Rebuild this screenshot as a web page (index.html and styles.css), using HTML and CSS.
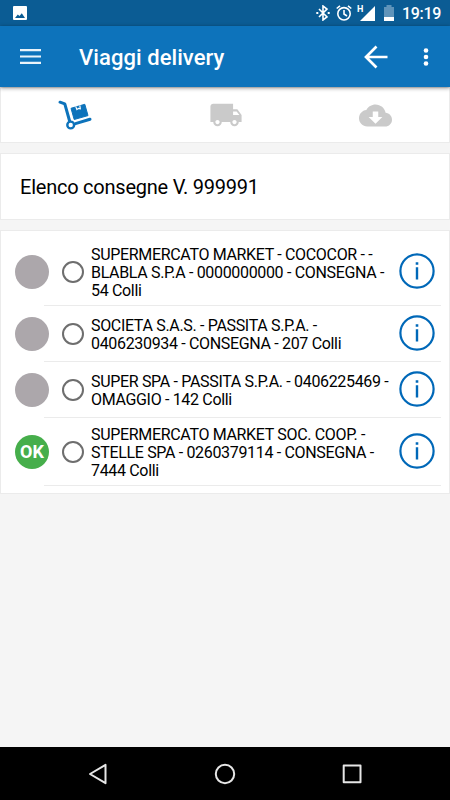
FILE: index.html
```html
<!DOCTYPE html>
<html lang="it">
<head>
    <meta charset="UTF-8">
    <meta name="viewport" content="width=device-width, initial-scale=1.0">
    <title>Viaggi delivery</title>
    <link rel="stylesheet" href="styles.css">
</head>
<body>
    <div class="status-bar">
        <svg class="picture" width="14" height="14" viewBox="0 0 14 14"><path fill="#fff" fill-rule="evenodd" d="M1 0h12a1 1 0 0 1 1 1v12a1 1 0 0 1-1 1H1a1 1 0 0 1-1-1V1a1 1 0 0 1 1-1zM2 12h10L8.8 7.2 6.500 10 4.800 8.400z"/></svg>
        <svg class="bluetooth" width="14" height="16" viewBox="0 0 14 16" fill="none" stroke="#fff" stroke-width="1.600"><path d="M3 4l8 8-4 3V1l4 3-8 8"/><path d="M.3 8h2M11.700 8h2" stroke-width="2"/></svg>
        <svg class="alarm" width="16" height="16" viewBox="0 0 16 16" fill="none" stroke="#fff" stroke-width="1.600"><circle cx="8" cy="8.800" r="6.200"/><path d="M8 5v4l3 2M.7 3.500L4 .8M15.300 3.500L12 .8"/></svg>
        <span class="net">H</span>
        <svg class="signal" width="15" height="15" viewBox="0 0 15 15"><path fill="#fff" d="M15 0v15H0z"/></svg>
        <svg class="battery" width="10" height="16" viewBox="0 0 10 16"><path fill="#5f94ba" d="M0 2h2.500V0h5v2H10v10H0z"/><path fill="#fff" d="M0 12h10v4H0z"/></svg>
        <span class="clock">19:19</span>
    </div>

    <div class="app-bar">
        <svg class="menu" width="21" height="15" viewBox="0 0 21 15"><path fill="#e9f3fa" d="M0 0h21v2.200H0zM0 6.400h21v2.200H0zM0 12.800h21V15H0z"/></svg>
        <h1>Viaggi delivery</h1>
        <svg class="back" width="24" height="24" viewBox="0 0 24 24" fill="none" stroke="#fff" stroke-width="2.700"><path d="M23.500 12H2.500M12.500 1.500L2 12l10.500 10.500"/></svg>
        <svg class="more" width="6" height="20" viewBox="0 0 6 20" fill="#fff"><circle cx="3" cy="3.500" r="2.300"/><circle cx="3" cy="10" r="2.300"/><circle cx="3" cy="16.500" r="2.300"/></svg>
    </div>

    <div class="tabs">
        <div class="tab">
            <svg class="dolly" width="34" height="30" viewBox="0 0 34 30">
                <path fill="none" stroke="#0d73bb" stroke-width="3" stroke-linecap="round" stroke-linejoin="round" d="M2 2.200L6.800 3.800 11.600 21M17.500 23.600L32 19.200"/>
                <circle cx="12.700" cy="25" r="3.400" fill="#fff" stroke="#0d73bb" stroke-width="2.400"/>
                <path fill="#0d73bb" stroke="#0d73bb" stroke-width="1" stroke-linejoin="round" d="M13 8.300L26.800 4.300 30 15.600 16.200 19.500z"/>
                <path fill="none" stroke="#fff" stroke-width="1.200" d="M17.700 6.400l1.200 3.200 1.500-1.200 1.900.4-.5-3.500"/>
            </svg>
        </div>
        <div class="tab">
            <svg width="34" height="34" viewBox="0 0 24 24"><path fill="#cacaca" d="M20 8h-3V4H3c-1.100 0-2 .9-2 2v11h2c0 1.660 1.340 3 3 3s3-1.340 3-3h6c0 1.660 1.340 3 3 3s3-1.340 3-3h2v-5l-3-4zM6 18.500c-.83 0-1.500-.67-1.500-1.500s.67-1.500 1.500-1.500 1.500.67 1.500 1.500-.67 1.500-1.500 1.500zm13.500-9l1.960 2.500H17V9.500h2.500zm-1.500 9c-.83 0-1.500-.67-1.500-1.500s.67-1.500 1.500-1.500 1.500.67 1.500 1.500-.67 1.500-1.500 1.500z"/></svg>
        </div>
        <div class="tab">
            <svg width="33" height="33" viewBox="0 0 24 24"><path fill="#cacaca" fill-rule="evenodd" d="M19.350 10.040C18.670 6.590 15.640 4 12 4 9.110 4 6.600 5.640 5.350 8.040 2.340 8.360 0 10.910 0 14c0 3.310 2.690 6 6 6h13c2.760 0 5-2.240 5-5 0-2.640-2.050-4.780-4.650-4.960zM17 13l-5 5-5-5h3V9h4v4h3z"/></svg>
        </div>
    </div>

    <div class="card heading">Elenco consegne V. 999991</div>

    <div class="card list">
        <div class="row tall">
            <span class="state"></span>
            <div class="content">
                <span class="radio"></span>
                <p>SUPERMERCATO MARKET - COCOCOR - -<br>BLABLA S.P.A - 0000000000 - CONSEGNA -<br>54 Colli</p>
                <svg class="info" width="36" height="36" viewBox="0 0 36 36"><circle cx="18" cy="18" r="16.600" fill="none" stroke="#0068b8" stroke-width="2.200"/><path fill="#0068b8" d="M16.700 9.300h2.600v2.400h-2.600zM16.800 14.300h2.400V26.500h-2.400z"/></svg>
            </div>
        </div>
        <div class="row">
            <span class="state"></span>
            <div class="content">
                <span class="radio"></span>
                <p>SOCIETA S.A.S. - PASSITA S.P.A. -<br>0406230934 - CONSEGNA - 207 Colli</p>
                <svg class="info" width="36" height="36" viewBox="0 0 36 36"><circle cx="18" cy="18" r="16.600" fill="none" stroke="#0068b8" stroke-width="2.200"/><path fill="#0068b8" d="M16.700 9.300h2.600v2.400h-2.600zM16.800 14.300h2.400V26.500h-2.400z"/></svg>
            </div>
        </div>
        <div class="row">
            <span class="state"></span>
            <div class="content">
                <span class="radio"></span>
                <p>SUPER SPA - PASSITA S.P.A. - 0406225469 -<br>OMAGGIO - 142 Colli</p>
                <svg class="info" width="36" height="36" viewBox="0 0 36 36"><circle cx="18" cy="18" r="16.600" fill="none" stroke="#0068b8" stroke-width="2.200"/><path fill="#0068b8" d="M16.700 9.300h2.600v2.400h-2.600zM16.800 14.300h2.400V26.500h-2.400z"/></svg>
            </div>
        </div>
        <div class="row tall last">
            <span class="state ok">OK</span>
            <div class="content">
                <span class="radio"></span>
                <p>SUPERMERCATO MARKET SOC. COOP. -<br>STELLE SPA - 0260379114 - CONSEGNA -<br>7444 Colli</p>
                <svg class="info" width="36" height="36" viewBox="0 0 36 36"><circle cx="18" cy="18" r="16.600" fill="none" stroke="#0068b8" stroke-width="2.200"/><path fill="#0068b8" d="M16.700 9.300h2.600v2.400h-2.600zM16.800 14.300h2.400V26.500h-2.400z"/></svg>
            </div>
        </div>
    </div>

    <div class="nav-bar">
        <svg width="22" height="22" viewBox="0 0 22 22"><path d="M18.500 1.800v18.400L3 11z"/></svg>
        <svg width="22" height="22" viewBox="0 0 22 22"><circle cx="11" cy="11" r="9.200"/></svg>
        <svg width="22" height="22" viewBox="0 0 22 22"><path d="M2.700 2.500h16.800v16.800H2.700z"/></svg>
    </div>
</body>
</html>
```
FILE: styles.css
```css
* {
    box-sizing: border-box;
}
body {
    margin: 0;
    height: 800px;
    display: flex;
    flex-direction: column;
    overflow: hidden;
    background: #f5f5f5;
    color: #000;
    font-family: Roboto, sans-serif;
}
svg {
    display: block;
    flex: none;
}
.status-bar {
    flex: none;
    display: flex;
    align-items: center;
    height: 26px;
    padding: 0 9px 0 13px;
    background: #0b5c94;
    color: #fff;
}
.bluetooth {
    margin-left: auto;
}
.alarm {
    margin-left: 6px;
}
.net {
    align-self: flex-start;
    width: 6px;
    margin: 5px -3px 0 5px;
    font-size: 9px;
    line-height: 8px;
    font-weight: 700;
}
.battery {
    margin-left: 9px;
}
.clock {
    width: 39px;
    margin: 2px 0 0 8px;
    font-size: 16px;
    font-weight: 500;
    line-height: 24px;
    letter-spacing: -0.3px;
    white-space: nowrap;
}
.app-bar {
    flex: none;
    display: flex;
    align-items: center;
    height: 61px;
    padding: 0 21px 0 20px;
    background: #0d73bb;
    box-shadow: 0 1px 4px rgba(0, 0, 0, 0.45);
    z-index: 1;
}
.app-bar h1 {
    flex: 1;
    margin: 3px 0 0 38px;
    color: #fff;
    font-size: 22px;
    font-weight: 500;
    line-height: 28px;
    letter-spacing: 0.07px;
}
.more {
    margin-left: 35px;
}
.tabs {
    flex: none;
    display: grid;
    grid-template-columns: repeat(3, 1fr);
    height: 56px;
    background: #fff;
    border: 1px solid #ebebeb;
}
.tab {
    display: flex;
    align-items: center;
    justify-content: center;
    padding-left: 2px;
}
.dolly {
    margin: 0 4px 1px 0;
}
.card {
    flex: none;
    background: #fff;
    border: 1px solid #ebebeb;
}
.heading {
    height: 67px;
    margin: 10px 0;
    padding: 0 19px;
    font-size: 20px;
    line-height: 66px;
    letter-spacing: -0.23px;
}
.list {
    height: 264px;
    padding: 8px 8px 0 14px;
}
.row {
    display: flex;
    align-items: center;
    height: 56px;
}
.tall {
    height: 67px;
}
.last {
    margin-top: 1px;
}
.state {
    flex: none;
    width: 34px;
    height: 34px;
    margin: 0 -5px 1px 0;
    border-radius: 50%;
    background: #aca7ab;
}
.ok {
    background: #46ae4b;
    color: #fff;
    font-size: 18px;
    font-weight: 700;
    line-height: 34px;
    text-align: center;
}
.content {
    flex: 1;
    display: flex;
    align-items: center;
    height: 100%;
    border-bottom: 1px solid #ebebeb;
}
.radio {
    flex: none;
    width: 22px;
    height: 22px;
    margin-left: 18px;
    border: 2px solid #6e6e6e;
    border-radius: 50%;
}
.content p {
    flex: 1;
    margin: 2px 0 0 7px;
    font-size: 16px;
    line-height: 18px;
    letter-spacing: -0.33px;
    white-space: nowrap;
}
.info {
    margin: 0 6px 2px 0;
}
.nav-bar {
    flex: none;
    display: flex;
    align-items: center;
    justify-content: space-between;
    height: 53px;
    margin-top: auto;
    padding: 1px 87px 0 87px;
    background: #000;
}
.nav-bar svg {
    fill: none;
    stroke: #e6e6e6;
    stroke-width: 2;
    stroke-linejoin: round;
}
```
